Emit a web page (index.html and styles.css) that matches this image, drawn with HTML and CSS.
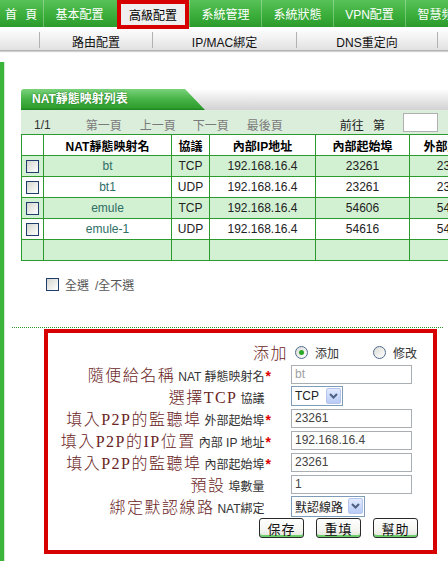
FILE: index.html
```html
<!DOCTYPE html>
<html lang="zh-Hant">
<head>
<meta charset="utf-8">
<title>NAT靜態映射</title>
<link rel="stylesheet" href="styles.css">
</head>
<body>
<div class="topnav">
  <div class="tn first">首 頁</div>
  <div class="tn">基本配置</div>
  <div class="tn active">高級配置</div>
  <div class="tn">系統管理</div>
  <div class="tn">系統狀態</div>
  <div class="tn">VPN配置</div>
  <div class="tn">智慧頻寬</div>
</div>
<div class="subnav">
  <div class="sn blank"></div>
  <div class="sn w113">路由配置</div>
  <div class="sn w144">IP/MAC綁定</div>
  <div class="sn w141">DNS重定向</div>
  <div class="sn rest"></div>
</div>
<div class="main">
  <div class="sidebar"></div>
  <div class="content">
    <div class="tabbar">
      <div class="tab">NAT靜態映射列表</div>
    </div>
    <div class="pager">
      <span class="pg cur">1/1</span>
      <span class="pg link m35">第一頁</span>
      <span class="pg link m18">上一頁</span>
      <span class="pg link m17">下一頁</span>
      <span class="pg link m18">最後頁</span>
      <span class="pg goto">前往 第</span>
      <span class="pgbox"></span>
    </div>
    <table class="grid">
      <tr class="head">
        <th class="c1"></th>
        <th class="c2">NAT靜態映射名</th>
        <th class="c3">協議</th>
        <th class="c4">內部IP地址</th>
        <th class="c5">內部起始埠</th>
        <th class="c6">外部起始埠</th>
      </tr>
      <tr class="g">
        <td><span class="cb"></span></td>
        <td class="nm">bt</td><td>TCP</td><td>192.168.16.4</td><td>23261</td><td>23261</td>
      </tr>
      <tr>
        <td><span class="cb"></span></td>
        <td class="nm">bt1</td><td>UDP</td><td>192.168.16.4</td><td>23261</td><td>23261</td>
      </tr>
      <tr class="g">
        <td><span class="cb"></span></td>
        <td class="nm">emule</td><td>TCP</td><td>192.168.16.4</td><td>54606</td><td>54606</td>
      </tr>
      <tr>
        <td><span class="cb"></span></td>
        <td class="nm">emule-1</td><td>UDP</td><td>192.168.16.4</td><td>54616</td><td>54616</td>
      </tr>
      <tr class="g">
        <td></td><td></td><td></td><td></td><td></td><td></td>
      </tr>
    </table>
    <div class="selall">
      <span class="cb"></span>
      <span class="sa1">全選</span>
      <span class="sa2">/全不選</span>
    </div>
    <div class="divider"></div>
    <div class="redbox">
      <div class="frow">
        <div class="lbl tight"><span class="note">添加</span></div>
        <div class="fld radios">
          <span class="radio on"></span><span class="rtxt">添加</span>
          <span class="radio r2"></span><span class="rtxt">修改</span>
        </div>
      </div>
      <div class="frow">
        <div class="lbl"><span class="note">隨便給名稱</span><span class="sm">NAT 靜態映射名</span><span class="req">*</span></div>
        <div class="fld"><input class="inp dim" type="text" value="bt"></div>
      </div>
      <div class="frow">
        <div class="lbl"><span class="note">選擇TCP</span><span class="sm">協議</span><span class="req ghost">*</span></div>
        <div class="fld">
          <div class="sel w52"><span class="selv">TCP</span><span class="selbtn"><svg width="9" height="6" viewBox="0 0 9 6"><polyline points="1,1 4.5,4.5 8,1" fill="none" stroke="#4d6185" stroke-width="2"/></svg></span></div>
        </div>
      </div>
      <div class="frow">
        <div class="lbl"><span class="note">填入P2P的監聽埠</span><span class="sm">外部起始埠</span><span class="req">*</span></div>
        <div class="fld"><input class="inp" type="text" value="23261"></div>
      </div>
      <div class="frow">
        <div class="lbl"><span class="note">填入P2P的IP位置</span><span class="sm">內部 IP 地址</span><span class="req">*</span></div>
        <div class="fld"><input class="inp" type="text" value="192.168.16.4"></div>
      </div>
      <div class="frow">
        <div class="lbl"><span class="note">填入P2P的監聽埠</span><span class="sm">內部起始埠</span><span class="req">*</span></div>
        <div class="fld"><input class="inp" type="text" value="23261"></div>
      </div>
      <div class="frow">
        <div class="lbl"><span class="note">預設</span><span class="sm">埠數量</span><span class="req ghost">*</span></div>
        <div class="fld"><input class="inp" type="text" value="1"></div>
      </div>
      <div class="frow">
        <div class="lbl"><span class="note">綁定默認線路</span><span class="sm">NAT綁定</span><span class="req ghost">*</span></div>
        <div class="fld">
          <div class="sel w74"><span class="selv">默認線路</span><span class="selbtn"><svg width="9" height="6" viewBox="0 0 9 6"><polyline points="1,1 4.5,4.5 8,1" fill="none" stroke="#4d6185" stroke-width="2"/></svg></span></div>
        </div>
      </div>
      <div class="frow btns">
        <button class="btn" type="button">保存</button>
        <button class="btn" type="button">重填</button>
        <button class="btn" type="button">幫助</button>
      </div>
    </div>
  </div>
</div>
</body>
</html>
```
FILE: styles.css
```css
html, body {
  margin: 0;
  padding: 0;
  overflow: hidden;
}
body {
  width: 448px;
  height: 561px;
  background: #fff;
  font-family: "Liberation Sans", "Noto Sans CJK TC", sans-serif;
  font-size: 12px;
  color: #222;
}

/* top navigation */
.topnav {
  display: flex;
  height: 27px;
  background: linear-gradient(#58c258, #3bae3b 55%, #2c9b2c);
  position: relative;
  z-index: 2;
}
.tn {
  flex: none;
  width: 72px;
  box-sizing: border-box;
  display: flex;
  align-items: center;
  justify-content: center;
  color: #fff;
  border-left: 1px solid rgba(255, 255, 255, 0.3);
  white-space: nowrap;
}
.tn.first {
  width: 43px;
  border-left: none;
  justify-content: flex-start;
  padding-left: 5px;
  word-spacing: 5px;
}
.tn.active {
  align-self: flex-start;
  height: 29px;
  margin-left: 2px;
  border: 4px solid #d60000;
  background: #efefef;
  color: #000;
}

/* sub navigation */
.subnav {
  display: flex;
  height: 23px;
  background: linear-gradient(#ffffff, #f3f3f3 45%, #e1e1e1);
  border-bottom: 1px solid #b4b4b4;
  box-shadow: 0 1px 1px rgba(0, 0, 0, 0.18);
}
.sn {
  flex: none;
  box-sizing: border-box;
  margin-top: 5px;
  height: 16px;
  padding-top: 3px;
  display: flex;
  align-items: center;
  justify-content: center;
  border-left: 1px solid #b2b2b2;
  color: #111;
  white-space: nowrap;
}
.sn.blank { width: 39px; border-left: none; }
.sn.w113 { width: 113px; }
.sn.w144 { width: 144px; }
.sn.w141 { width: 141px; }
.sn.rest { flex: 1; }

/* main area */
.main {
  display: flex;
  height: 510px;
}
.sidebar {
  flex: none;
  width: 4px;
  margin-top: 11px;
  background: #3cb43c;
  border-right: 1px solid #cfeacf;
}
.content {
  flex: none;
  width: 520px;
  padding: 38px 0 0 16px;
}

/* list tab */
.tabbar {
  height: 21px;
  background: linear-gradient(#ffffff, #ececec 40%, #d2d2d2);
}
.tab {
  width: 184px;
  height: 21px;
  box-sizing: border-box;
  padding-left: 11px;
  line-height: 21px;
  color: #fff;
  font-weight: bold;
  text-shadow: 0 0 2px #1b6e1b;
  background: linear-gradient(#7ad27a, #45b245 50%, #2e9e2e 90%, #1e7e1e);
  clip-path: polygon(0 0, 164px 0, 184px 100%, 0 100%);
  border-top-left-radius: 3px;
}

/* pager */
.pager {
  display: flex;
  align-items: center;
  height: 24px;
  background: #dbeedb;
}
.pg { padding-top: 5px; white-space: nowrap; }
.pg.cur { margin-left: 13px; color: #333; }
.pg.link { color: #7a7a7a; }
.m35 { margin-left: 35px; }
.m18 { margin-left: 18px; }
.m17 { margin-left: 17px; }
.pg.goto { margin-left: 57px; color: #222; word-spacing: 6px; }
.pgbox {
  margin-left: 18px;
  width: 35px;
  height: 19px;
  box-sizing: border-box;
  border: 1px solid #b0b0b0;
  background: #fff;
}

/* grid */
.grid {
  width: 476px;
  border-collapse: collapse;
  table-layout: fixed;
}
.grid th, .grid td {
  border: 1px solid #2d9a2d;
  padding: 0;
  height: 20px;
  text-align: center;
  white-space: nowrap;
  overflow: hidden;
}
.grid th {
  font-weight: bold;
  color: #000;
  background: #fff;
}
.grid td { color: #222; }
.grid tr.g td { background: #d2f0d2; }
.grid td.nm { color: #2e6f66; }
.c1 { width: 21px; }
.c2 { width: 127px; }
.c3 { width: 37px; }
.c4 { width: 105px; }
.c5 { width: 93px; }
.c6 { width: 87px; }

.cb {
  display: inline-block;
  width: 13px;
  height: 13px;
  box-sizing: border-box;
  border: 1px solid #1f3d6d;
  background: linear-gradient(135deg, #d6d6cf, #ffffff);
  vertical-align: middle;
}

/* select all */
.selall {
  display: flex;
  align-items: center;
  height: 13px;
  margin: 17px 0 0 25px;
  color: #555;
}
.sa1 { margin-left: 6px; }
.sa2 { margin-left: 6px; }

.divider {
  margin: 36px 0 0 -9px;
  width: 431px;
  border-top: 1px dotted #2f9a2f;
}

/* annotated form */
.redbox {
  margin: 1px 0 0 23px;
  width: 393px;
  height: 225px;
  box-sizing: border-box;
  border: 4px solid #d60000;
  padding-top: 8px;
}
.frow {
  display: flex;
  align-items: center;
  height: 22px;
}
.lbl {
  flex: none;
  width: 243px;
  box-sizing: border-box;
  padding-right: 20px;
  display: flex;
  justify-content: flex-end;
  align-items: baseline;
  white-space: nowrap;
}
.lbl.tight { padding-right: 0; }
.note {
  font-family: "Liberation Serif", "Noto Sans CJK TC", serif;
  font-size: 16px;
  font-weight: 300;
  letter-spacing: 1.5px;
  color: #6a2424;
  margin-right: 3px;
}
.sm { color: #333; font-size: 12px; }
.req {
  color: #e00000;
  font-weight: bold;
  font-size: 14px;
  margin-left: 1px;
}
.req.ghost { visibility: hidden; }

.fld { display: flex; align-items: center; }
.inp {
  display: block;
  width: 121px;
  height: 19px;
  box-sizing: border-box;
  margin: 0;
  padding: 0 3px;
  border: 1px solid #a9aeb3;
  font-family: "Liberation Sans", "Noto Sans CJK TC", sans-serif;
  font-size: 12px;
  color: #444;
  background: #fff;
}
.inp.dim { color: #a0a0a0; }

.radios { padding-left: 4px; }
.radio {
  width: 13px;
  height: 13px;
  box-sizing: border-box;
  border-radius: 50%;
  border: 1px solid #4d6d8f;
  background: linear-gradient(135deg, #dcdcd6, #ffffff);
  display: flex;
  align-items: center;
  justify-content: center;
}
.radio.on::after {
  content: "";
  width: 5px;
  height: 5px;
  border-radius: 50%;
  background: #2aa82a;
}
.radio.r2 { margin-left: 34px; }
.rtxt { margin-left: 7px; color: #333; }

.sel {
  display: flex;
  align-items: center;
  justify-content: space-between;
  height: 20px;
  box-sizing: border-box;
  border: 1px solid #7f9db9;
  background: #fff;
  padding: 0 1px 0 3px;
}
.sel.w52 { width: 52px; }
.sel.w74 { width: 74px; height: 21px; }
.selv { color: #222; white-space: nowrap; }
.selbtn {
  width: 15px;
  height: 16px;
  box-sizing: border-box;
  border: 1px solid #b4c6ee;
  border-radius: 2px;
  background: linear-gradient(#e2eafe, #b8cbf6);
  display: flex;
  align-items: center;
  justify-content: center;
}

.frow.btns {
  padding-left: 211px;
  gap: 12px;
}
.btn {
  width: 45px;
  height: 20px;
  box-sizing: border-box;
  margin: 0;
  padding: 0;
  border: 1px solid #2a2a2a;
  border-radius: 3px;
  background: linear-gradient(#ffffff, #f5f5f1 60%, #e4e4dc);
  box-shadow: inset 0 -2px 0 #6ccf6c;
  font-family: "Liberation Sans", "Noto Sans CJK TC", sans-serif;
  font-size: 13px;
  letter-spacing: 1px;
  color: #111;
}
```
